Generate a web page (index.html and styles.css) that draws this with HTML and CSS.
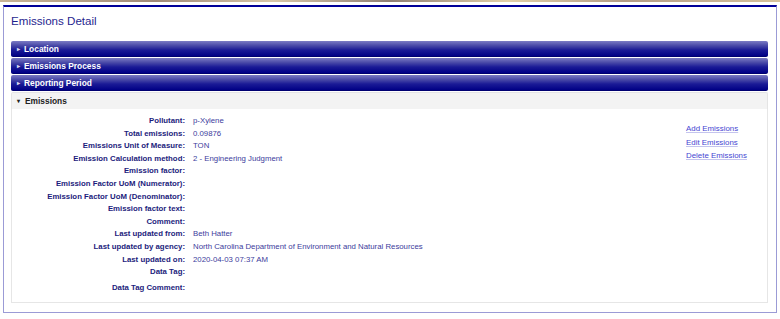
FILE: index.html
```
<!doctype html>
<html lang="en">
  <head>
    <meta charset="UTF-8" />
    <title>Emissions Detail</title>
    <link rel="stylesheet" href="styles.css">
  </head>
  <body>
    <div class="banner"></div>
    <div class="page">
      <h1 class="page-title">Emissions Detail</h1>

      <div class="accordion">
        <div class="acc-header"><span class="acc-arrow">&#9656;</span>Location</div>
        <div class="acc-header"><span class="acc-arrow">&#9656;</span>Emissions Process</div>
        <div class="acc-header"><span class="acc-arrow">&#9656;</span>Reporting Period</div>
        <div class="acc-header open"><span class="acc-arrow">&#9662;</span>Emissions</div>

        <div class="acc-body">
          <dl class="details">
            <dt>Pollutant:</dt><dd>p-Xylene</dd>
            <dt>Total emissions:</dt><dd>0.09876</dd>
            <dt>Emissions Unit of Measure:</dt><dd>TON</dd>
            <dt>Emission Calculation method:</dt><dd>2 - Engineering Judgment</dd>
            <dt>Emission factor:</dt><dd></dd>
            <dt>Emission Factor UoM (Numerator):</dt><dd></dd>
            <dt>Emission Factor UoM (Denominator):</dt><dd></dd>
            <dt>Emission factor text:</dt><dd></dd>
            <dt>Comment:</dt><dd></dd>
            <dt>Last updated from:</dt><dd>Beth Hatter</dd>
            <dt>Last updated by agency:</dt><dd>North Carolina Department of Environment and Natural Resources</dd>
            <dt>Last updated on:</dt><dd>2020-04-03 07:37 AM</dd>
            <dt class="tall">Data Tag:</dt><dd class="tall"></dd>
            <dt>Data Tag Comment:</dt><dd></dd>
          </dl>

          <ul class="actions">
            <li><a href="#">Add Emissions</a></li>
            <li><a href="#">Edit Emissions</a></li>
            <li><a href="#">Delete Emissions</a></li>
          </ul>
        </div>
      </div>
    </div>
  </body>
</html>
```

FILE: styles.css
```
* {
  margin: 0;
  padding: 0;
  box-sizing: border-box;
}

body {
  font-family: "Liberation Sans", Arial, sans-serif;
  background: white;
  color: #1c1c7c;
}

.banner {
  height: 2px;
  background: linear-gradient(90deg, #c9b596, #a08a78 20%, #d8c7a8 35%, #8f7f74 50%, #e2d0a8 65%, #b39c86 80%, #d6c29c);
}

.page {
  margin: 3px 3px 0 3px;
  height: 308px;
  border-top: 2px solid #000099;
  border-left: 1px solid #9b9bd6;
  border-right: 1px solid #9b9bd6;
  border-bottom: 1px solid #9b9bd6;
  padding: 0 8px 0 7px;
}

.page-title {
  font-size: 11.6px;
  font-weight: normal;
  color: #1f1f8f;
  line-height: 14px;
  margin-top: 7px;
  margin-bottom: 13px;
}

.acc-header {
  height: 16px;
  margin-bottom: 1px;
  border-radius: 2px;
  background: linear-gradient(#7b7bc4 0%, #4a4aa8 30%, #1a1a96 60%, #000085 100%);
  border-bottom: 1px solid #000070;
  color: white;
  font-size: 8.4px;
  font-weight: bold;
  line-height: 16px;
  display: flex;
  align-items: center;
}

.acc-arrow {
  font-size: 6px;
  width: 13px;
  padding-left: 6px;
  color: #d8d8f0;
}

.acc-header.open {
  height: 17px;
  margin-bottom: 0;
  background: #f3f3f3;
  border: 1px solid #e4e4e4;
  border-bottom: none;
  border-radius: 2px 2px 0 0;
  color: #222;
}

.acc-header.open .acc-arrow {
  color: #222;
  padding-left: 5px;
}

.acc-body {
  height: 194px;
  border: 1px solid #e6e6e6;
  border-top: none;
  display: flex;
  justify-content: space-between;
  padding: 6px 0 0 0;
}

.details {
  display: grid;
  grid-template-columns: 173px 1fr;
  column-gap: 8px;
  font-size: 7.8px;
  line-height: 12.6px;
  align-content: start;
}

.details dt {
  text-align: right;
  font-weight: bold;
  color: #1c1c7c;
}

.details dd {
  color: #3c3c9c;
  white-space: nowrap;
}

.details .tall {
  height: 16px;
}

.actions {
  list-style: none;
  width: 81px;
  padding-top: 7px;
  font-size: 7.9px;
  line-height: 13.5px;
}

.actions a {
  color: #4646d2;
  text-decoration: underline;
  text-decoration-color: #c4c4ee;
}
```
